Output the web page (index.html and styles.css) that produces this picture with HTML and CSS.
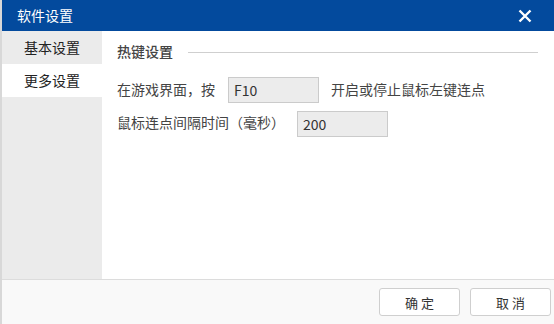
FILE: index.html
```html
<!DOCTYPE html>
<html>
<head>
<meta charset="utf-8">
<link rel="stylesheet" href="styles.css">
</head>
<body>
<div class="dialog">
  <div class="titlebar">
    <span class="title">软件设置</span>
    <svg class="close" width="14" height="14" viewBox="0 0 14 14"><path d="M1.5 1.5L12.5 12.5M12.5 1.5L1.5 12.5" stroke="#fff" stroke-width="2.4" fill="none"/></svg>
  </div>
  <div class="main">
    <div class="sidebar">
      <div class="nav-item">基本设置</div>
      <div class="nav-item active">更多设置</div>
    </div>
    <div class="content">
      <div class="section-head">
        <span class="section-title">热键设置</span>
        <span class="rule"></span>
      </div>
      <div class="row row1">
        <span>在游戏界面，按</span>
        <div class="field">F10</div>
        <span>开启或停止鼠标左键连点</span>
      </div>
      <div class="row row2">
        <span>鼠标连点间隔时间（毫秒）</span>
        <div class="field">200</div>
      </div>
    </div>
  </div>
  <div class="footer">
    <button class="btn">确 定</button>
    <button class="btn">取 消</button>
  </div>
</div>
</body>
</html>
```
FILE: styles.css
```css
html, body { margin: 0; padding: 0; }
body {
  width: 554px; height: 324px; overflow: hidden;
  font-family: "Noto Sans CJK SC", "Noto Sans", sans-serif;
  font-size: 14px; color: #333; background: #fff;
}
.dialog { display: flex; flex-direction: column; height: 324px; border-left: 2px solid #d8d8d8; box-sizing: border-box; }
.titlebar {
  height: 31px; background: #034a9d; color: #fff;
  display: flex; align-items: center; justify-content: space-between;
  padding: 0 22px 0 15px; flex: none;
}
.title { font-size: 14px; line-height: 31px; }
.close { display: block; }
.main { flex: 1; display: flex; min-height: 0; }
.sidebar { width: 100px; background: #ebebeb; flex: none; }
.nav-item { height: 33px; line-height: 33px; padding-left: 22px; color: #222; }
.nav-item.active { background: #fff; }
.content { flex: 1; padding: 10px 16px 0 15px; }
.section-head { display: flex; align-items: center; height: 20px; }
.section-title { color: #444; font-weight: 500; }
.rule { flex: 1; height: 1px; background: #cfcfcf; margin-left: 15px; margin-top: 2px; }
.row { display: flex; align-items: center; color: #444; }
.row1 { margin-top: 15px; }
.row2 { margin-top: 7px; }
.field {
  width: 84px; height: 24px; border: 1px solid #cbcbcb; background: #ececec;
  line-height: 24px; padding-left: 5px; box-sizing: content-box; color: #333;
  margin: 0 12px 0 13px; position: relative; top: 1px;
}
.row2 .field { margin-left: 12px; top: 2px; }
.footer {
  height: 44px; flex: none; background: #f9f9f9; border-top: 1px solid #dcdcdc;
  display: flex; justify-content: flex-end; align-items: center; gap: 10px; padding-right: 3px;
}
.btn {
  width: 81px; height: 28px; background: #fff; border: 1px solid #cfcfcf; border-radius: 3px;
  font-family: "Noto Sans CJK SC", sans-serif; font-size: 13px; color: #333; padding: 0;
}
```
